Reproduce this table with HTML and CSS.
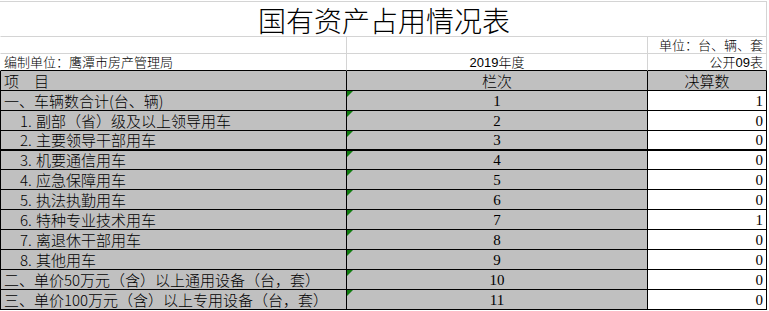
FILE: index.html
```html
<!DOCTYPE html>
<html lang="zh-CN">
<head>
<meta charset="utf-8">
<title>国有资产占用情况表</title>
<link rel="stylesheet" href="styles.css">
</head>
<body>
<div class="sheet">
  <div class="cell title">国有资产占用情况表</div>

  <div class="cell top c1"></div>
  <div class="cell top c2"></div>
  <div class="cell top c3 small right">单位：台、辆、套</div>

  <div class="cell top last c1 small">编制单位：鹰潭市房产管理局</div>
  <div class="cell top last c2 small center">2019年度</div>
  <div class="cell top last c3 small right">公开09表</div>

  <div class="cell head c1">项　目</div>
  <div class="cell head c2 center">栏次</div>
  <div class="cell head c3 center">决算数</div>

  <div class="cell row c1">一、车辆数合计(台、辆)</div>
  <div class="cell row c2 num center flag">1</div>
  <div class="cell row c3 num right">1</div>

  <div class="cell row c1 indent"><span class="no">1.</span>副部（省）级及以上领导用车</div>
  <div class="cell row c2 num center flag">2</div>
  <div class="cell row c3 num right">0</div>

  <div class="cell row thick c1 indent"><span class="no">2.</span>主要领导干部用车</div>
  <div class="cell row thick c2 num center flag">3</div>
  <div class="cell row thick c3 num right">0</div>

  <div class="cell row short c1 indent"><span class="no">3.</span>机要通信用车</div>
  <div class="cell row short c2 num center flag">4</div>
  <div class="cell row short c3 num right">0</div>

  <div class="cell row c1 indent"><span class="no">4.</span>应急保障用车</div>
  <div class="cell row c2 num center flag">5</div>
  <div class="cell row c3 num right">0</div>

  <div class="cell row c1 indent"><span class="no">5.</span>执法执勤用车</div>
  <div class="cell row c2 num center flag">6</div>
  <div class="cell row c3 num right">0</div>

  <div class="cell row c1 indent"><span class="no">6.</span>特种专业技术用车</div>
  <div class="cell row c2 num center flag">7</div>
  <div class="cell row c3 num right">1</div>

  <div class="cell row c1 indent"><span class="no">7.</span>离退休干部用车</div>
  <div class="cell row c2 num center flag">8</div>
  <div class="cell row c3 num right">0</div>

  <div class="cell row c1 indent"><span class="no">8.</span>其他用车</div>
  <div class="cell row c2 num center flag">9</div>
  <div class="cell row c3 num right">0</div>

  <div class="cell row c1">二、单价50万元（含）以上通用设备（台，套）</div>
  <div class="cell row c2 num center flag">10</div>
  <div class="cell row c3 num right">0</div>

  <div class="cell row c1">三、单价100万元（含）以上专用设备（台，套）</div>
  <div class="cell row c2 num center flag">11</div>
  <div class="cell row c3 num right">0</div>
</div>
</body>
</html>
```
FILE: styles.css
```css
* { box-sizing: border-box; }

html, body {
  margin: 0;
  padding: 0;
  background: #ffffff;
}

body {
  font-family: "Noto Sans CJK SC", "Noto Sans", sans-serif;
  font-weight: 300;
  color: #000000;
}

.sheet {
  margin-top: 1px;
  width: 767px;
  display: grid;
  grid-template-columns: 347px 301px 119px;
  border-top: 1px solid #d4d4d4;
}

.cell {
  height: 20px;
  border-right: 1px solid #000;
  border-bottom: 1px solid #000;
  padding: 0 3px;
  white-space: nowrap;
  overflow: visible;
  font-size: 15px;
  line-height: 18px;
  display: flex;
  align-items: flex-end;
  position: relative;
}

.c1 { border-left: 1px solid #000; }

.title {
  grid-column: 1 / span 3;
  height: 35px;
  border-left: 1px solid transparent;
  border-right: 1px solid #d4d4d4;
  border-bottom: 1px solid #d4d4d4;
  justify-content: center;
  font-size: 28px;
  line-height: 32px;
  padding-left: 4px;
}

.top {
  height: 17px;
  border-right-color: #d4d4d4;
  border-bottom-color: #d4d4d4;
}

.top.c1 { border-left-color: transparent; }

.top.last { border-bottom-color: #000; }

.small {
  font-family: "Liberation Sans", "Noto Sans CJK SC", sans-serif;
  font-size: 13px;
  line-height: 15px;
}

.head {
  background: #c0c0c0;
  line-height: 18px;
}

.row.c1, .row.c2 { background: #c0c0c0; }
.row.c3 { background: #ffffff; }

.thick { border-bottom-width: 2px; }
.short { height: 19px; }

.center { justify-content: center; }
.right { justify-content: flex-end; }

.indent { padding-left: 19px; }

.no {
  display: inline-block;
  width: 16px;
}

.num {
  font-family: "Liberation Serif", serif;
  font-weight: 400;
  font-size: 15px;
  line-height: 18px;
}

.flag::before {
  content: "";
  position: absolute;
  left: 0;
  top: 0;
  width: 0;
  height: 0;
  border-top: 6px solid #107c10;
  border-right: 6px solid transparent;
}
```
